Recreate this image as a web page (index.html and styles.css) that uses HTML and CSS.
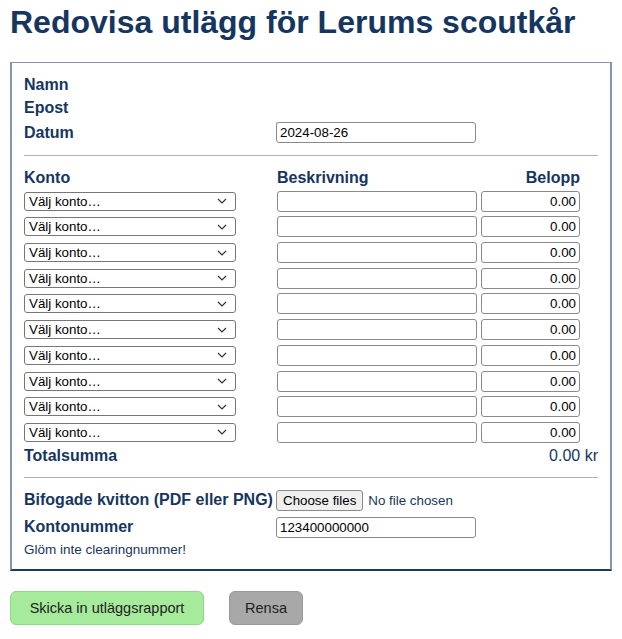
FILE: index.html
```html
<!DOCTYPE html>
<html lang="sv">
<head>
<meta charset="utf-8">
<title>Redovisa utlägg</title>
<link rel="stylesheet" href="styles.css">
</head>
<body>
<h1 class="title">Redovisa utlägg för Lerums scoutkår</h1>
<form class="box">
  <div class="info">
    <div class="row"><span class="label">Namn</span><span></span></div>
    <div class="row"><span class="label">Epost</span><span class="dot"></span></div>
    <div class="row"><span class="label">Datum</span><input class="field wide" type="text" value="2024-08-26"></div>
  </div>
  <hr class="sep">
  <div class="grid">
    <span class="label">Konto</span><span class="label">Beskrivning</span><span class="label right">Belopp</span>
    <div class="sel"><span>Välj konto…</span><svg width="10" height="6" viewBox="0 0 10 6"><path d="M1 1l4 4 4-4" fill="none" stroke="#333" stroke-width="1.2"/></svg></div><input class="field" type="text"><input class="field num" type="text" value="0.00">
    <div class="sel"><span>Välj konto…</span><svg width="10" height="6" viewBox="0 0 10 6"><path d="M1 1l4 4 4-4" fill="none" stroke="#333" stroke-width="1.2"/></svg></div><input class="field" type="text"><input class="field num" type="text" value="0.00">
    <div class="sel"><span>Välj konto…</span><svg width="10" height="6" viewBox="0 0 10 6"><path d="M1 1l4 4 4-4" fill="none" stroke="#333" stroke-width="1.2"/></svg></div><input class="field" type="text"><input class="field num" type="text" value="0.00">
    <div class="sel"><span>Välj konto…</span><svg width="10" height="6" viewBox="0 0 10 6"><path d="M1 1l4 4 4-4" fill="none" stroke="#333" stroke-width="1.2"/></svg></div><input class="field" type="text"><input class="field num" type="text" value="0.00">
    <div class="sel"><span>Välj konto…</span><svg width="10" height="6" viewBox="0 0 10 6"><path d="M1 1l4 4 4-4" fill="none" stroke="#333" stroke-width="1.2"/></svg></div><input class="field" type="text"><input class="field num" type="text" value="0.00">
    <div class="sel"><span>Välj konto…</span><svg width="10" height="6" viewBox="0 0 10 6"><path d="M1 1l4 4 4-4" fill="none" stroke="#333" stroke-width="1.2"/></svg></div><input class="field" type="text"><input class="field num" type="text" value="0.00">
    <div class="sel"><span>Välj konto…</span><svg width="10" height="6" viewBox="0 0 10 6"><path d="M1 1l4 4 4-4" fill="none" stroke="#333" stroke-width="1.2"/></svg></div><input class="field" type="text"><input class="field num" type="text" value="0.00">
    <div class="sel"><span>Välj konto…</span><svg width="10" height="6" viewBox="0 0 10 6"><path d="M1 1l4 4 4-4" fill="none" stroke="#333" stroke-width="1.2"/></svg></div><input class="field" type="text"><input class="field num" type="text" value="0.00">
    <div class="sel"><span>Välj konto…</span><svg width="10" height="6" viewBox="0 0 10 6"><path d="M1 1l4 4 4-4" fill="none" stroke="#333" stroke-width="1.2"/></svg></div><input class="field" type="text"><input class="field num" type="text" value="0.00">
    <div class="sel"><span>Välj konto…</span><svg width="10" height="6" viewBox="0 0 10 6"><path d="M1 1l4 4 4-4" fill="none" stroke="#333" stroke-width="1.2"/></svg></div><input class="field" type="text"><input class="field num" type="text" value="0.00">
  </div>
  <div class="total"><span class="label">Totalsumma</span><span class="sum">0.00 kr</span></div>
  <hr class="sep sep2">
  <div class="bottom">
    <div class="row"><span class="label">Bifogade kvitton (PDF eller PNG)</span><span class="file"><span class="filebtn">Choose files</span><span class="nofile">No file chosen</span></span></div>
    <div class="row"><span class="label">Kontonummer</span><input class="field wide" type="text" value="123400000000"></div>
    <p class="hint">Glöm inte clearingnummer!</p>
  </div>
</form>
<div class="actions">
  <button class="btn send" type="button">Skicka in utläggsrapport</button>
  <button class="btn clear" type="button">Rensa</button>
</div>
</body>
</html>
```

FILE: styles.css
```css
* { box-sizing: border-box; }
body {
  margin: 0;
  padding: 0 10px 0 10px;
  font-family: "Liberation Sans", Arial, sans-serif;
  color: #163660;
  background: #fff;
}
.title {
  margin: 4px 0 0;
  font-size: 32px;
  font-weight: bold;
  color: #163660;
  line-height: 37px;
  white-space: nowrap;
}
.box {
  margin-top: 21px;
  border: 2px solid #8495ad;
  border-top-width: 1px;
  border-bottom-color: #1d3a62;
  padding: 13px 12px 8px 12px;
  height: 509px;
}
.label {
  font-weight: bold;
  font-size: 16px;
  line-height: 18px;
}
.right { text-align: right; }
.info { display: flex; flex-direction: column; gap: 5px; }
.row {
  display: grid;
  grid-template-columns: 252px 1fr;
  align-items: center;
  min-height: 18px;
}
.dot {
  width: 1px;
  height: 1px;
  background: #bbb;
  align-self: end;
  margin-bottom: -6px;
}
.field {
  height: 21px;
  border: 1px solid #8a8a8a;
  border-radius: 3px;
  padding: 0 3px;
  font: 13.33px "Liberation Sans", Arial, sans-serif;
  color: #000;
  background: #fff;
  width: 100%;
}
.field.wide { width: 200px; }
.num { text-align: right; }
.sep {
  border: 0;
  border-top: 1px solid #b0b0b0;
  margin: 12px 0 13px;
}
.sep2 { margin: 12px 0 12px; }
.grid {
  display: grid;
  grid-template-columns: 249px 200px 99px;
  column-gap: 4px;
  row-gap: 4.7px;
  align-items: center;
}
.grid .label { margin-bottom: -1px; }
.grid .right { grid-column: 3; }
.sel {
  width: 212px;
  height: 19px;
  border: 1px solid #767676;
  border-radius: 3px;
  padding: 0 8px 0 4px;
  display: flex;
  align-items: center;
  justify-content: space-between;
  font-size: 13.33px;
  color: #000;
  background: #fff;
}
.total {
  display: flex;
  justify-content: space-between;
  align-items: center;
  margin-top: 4px;
}
.sum { font-size: 16px; }
.bottom { display: flex; flex-direction: column; gap: 6px; }
.file { display: flex; align-items: center; gap: 5px; font-size: 13.33px; }
.filebtn {
  height: 21px;
  padding: 0 6px;
  border: 1px solid #8a8a8a;
  border-radius: 3px;
  background: #efefef;
  color: #000;
  display: flex;
  align-items: center;
  font-size: 13.33px;
}
.nofile { color: #163660; }
.hint { margin: -2px 0 0; font-size: 13.5px; }
.actions {
  display: flex;
  gap: 25px;
  margin-top: 20px;
}
.btn {
  height: 34px;
  border-radius: 6px;
  font: 14.5px "Liberation Sans", Arial, sans-serif;
  color: #222;
  padding: 0;
  white-space: nowrap;
}
.send { background: #a6eb9c; border: 1px solid #92d688; width: 194px; }
.clear { background: #a8a8a8; border: 1px solid #999; width: 74px; }
```
